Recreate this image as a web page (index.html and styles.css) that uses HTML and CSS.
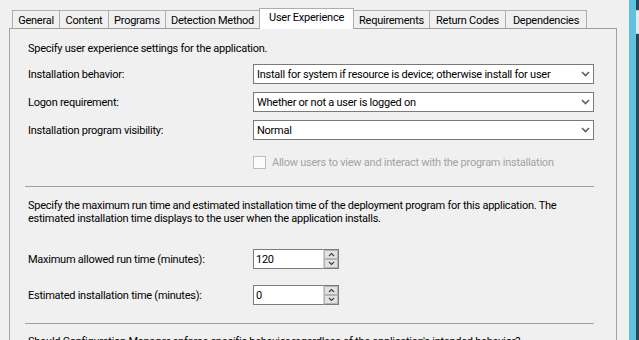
FILE: index.html
```html
<!DOCTYPE html>
<html>
<head>
<meta charset="utf-8">
<link rel="stylesheet" href="styles.css">
</head>
<body>
<div class="screen">
  <div class="main">
    <div class="tabs">
      <div class="tab w-general">General</div>
      <div class="tab w-content">Content</div>
      <div class="tab w-programs">Programs</div>
      <div class="tab w-detection">Detection Method</div>
      <div class="tab active w-ux">User Experience</div>
      <div class="tab w-req">Requirements</div>
      <div class="tab w-ret">Return Codes</div>
      <div class="tab w-dep">Dependencies</div>
    </div>
    <div class="panel">
      <p class="intro">Specify user experience settings for the application.</p>
      <div class="rows">
        <div class="row">
          <span class="label">Installation behavior:</span>
          <div class="select"><span class="value">Install for system if resource is device; otherwise install for user</span><svg class="chev" width="9" height="6" viewBox="0 0 9 6"><path d="M1 1 L4.5 4.5 L8 1" fill="none" stroke="#606060" stroke-width="1.6"/></svg></div>
        </div>
        <div class="row">
          <span class="label">Logon requirement:</span>
          <div class="select"><span class="value">Whether or not a user is logged on</span><svg class="chev" width="9" height="6" viewBox="0 0 9 6"><path d="M1 1 L4.5 4.5 L8 1" fill="none" stroke="#606060" stroke-width="1.6"/></svg></div>
        </div>
        <div class="row">
          <span class="label">Installation program visibility:</span>
          <div class="select"><span class="value">Normal</span><svg class="chev" width="9" height="6" viewBox="0 0 9 6"><path d="M1 1 L4.5 4.5 L8 1" fill="none" stroke="#606060" stroke-width="1.6"/></svg></div>
        </div>
      </div>
      <div class="check-row">
        <span class="checkbox"></span>
        <span class="check-label">Allow users to view and interact with the program installation</span>
      </div>
      <div class="sep"></div>
      <p class="para">Specify the maximum run time and estimated installation time of the deployment program for this application. The<br>estimated installation time displays to the user when the application installs.</p>
      <div class="row num-row first">
        <span class="label">Maximum allowed run time (minutes):</span>
        <div class="spin-field">
          <div class="num-input">120</div>
          <div class="spin">
            <div class="spin-btn up"><svg width="7" height="5" viewBox="0 0 7 5"><path d="M1 4 L3.5 1.5 L6 4" fill="none" stroke="#404040" stroke-width="1.2"/></svg></div>
            <div class="spin-btn down"><svg width="7" height="5" viewBox="0 0 7 5"><path d="M1 1 L3.5 3.5 L6 1" fill="none" stroke="#404040" stroke-width="1.2"/></svg></div>
          </div>
        </div>
      </div>
      <div class="row num-row second">
        <span class="label">Estimated installation time (minutes):</span>
        <div class="spin-field">
          <div class="num-input">0</div>
          <div class="spin">
            <div class="spin-btn up"><svg width="7" height="5" viewBox="0 0 7 5"><path d="M1 4 L3.5 1.5 L6 4" fill="none" stroke="#404040" stroke-width="1.2"/></svg></div>
            <div class="spin-btn down"><svg width="7" height="5" viewBox="0 0 7 5"><path d="M1 1 L3.5 3.5 L6 1" fill="none" stroke="#404040" stroke-width="1.2"/></svg></div>
          </div>
        </div>
      </div>
      <div class="sep sep2"></div>
      <p class="last">Should Configuration Manager enforce specific behavior regardless of the application's intended behavior?</p>
    </div>
  </div>
  <div class="gap"></div>
  <div class="blue"></div>
  <div class="edge"><div class="edge-box"></div></div>
</div>
</body>
</html>
```
FILE: styles.css
```css
html, body {
  margin: 0;
  padding: 0;
}
.screen {
  width: 639px;
  height: 340px;
  overflow: hidden;
  display: flex;
  background: #f0f0f0;
  font-family: Roboto, "Liberation Sans", sans-serif;
  font-size: 11px;
  letter-spacing: -0.25px;
  color: #000;
}
.main {
  width: 617px;
  flex: none;
  padding: 8px 0 0 9px;
  box-sizing: border-box;
}
.gap {
  width: 12px;
  flex: none;
  background: #f0f0f0;
}
.blue {
  width: 7px;
  flex: none;
  background: #5fc3e0;
}
.edge {
  width: 3px;
  flex: none;
  background: #2f4450;
  padding-top: 10px;
  box-sizing: border-box;
}
.edge-box {
  height: 22px;
  border-top: 1px solid #c8c8c8;
  border-bottom: 1px solid #c8c8c8;
  background: #e8e8e8;
}
.tabs {
  display: flex;
  align-items: flex-end;
  height: 20px;
  margin-left: 3px;
}
.tab {
  height: 18px;
  box-sizing: border-box;
  border: 1px solid #adadad;
  border-bottom: none;
  margin-left: -1px;
  display: flex;
  align-items: center;
  justify-content: center;
  background: #f0f0f0;
  white-space: nowrap;
  line-height: 14px;
  padding-top: 2px;
}
.tab:first-child {
  margin-left: 0;
}
.tab.active {
  height: 21px;
  margin-bottom: -1px;
  background: #fff;
  position: relative;
  z-index: 1;
  padding-top: 0;
  padding-bottom: 2px;
}
.w-general { width: 48px; }
.w-content { width: 50px; }
.w-programs { width: 58px; }
.w-detection { width: 95px; }
.w-ux { width: 95px; }
.w-req { width: 77px; }
.w-ret { width: 77px; }
.w-dep { width: 82px; }
.panel {
  width: 608px;
  height: 400px;
  box-sizing: border-box;
  border: 1px solid #a0a0a0;
  padding: 0 0 0 18px;
}
p {
  margin: 0;
}
.intro {
  margin-top: 12px;
  line-height: 16px;
}
.rows {
  margin-top: 7px;
  display: flex;
  flex-direction: column;
  gap: 8px;
}
.row {
  display: flex;
  align-items: center;
  height: 20px;
}
.label {
  width: 225px;
  flex: none;
  white-space: nowrap;
  padding-top: 1px;
}
.select {
  width: 341px;
  height: 20px;
  box-sizing: border-box;
  border: 1px solid #7a7a7a;
  background: #fff;
  display: flex;
  align-items: center;
  justify-content: space-between;
  padding: 1px 3px 0 3px;
}
.select .value {
  white-space: nowrap;
}
.chev {
  display: block;
  margin-top: -1px;
}
.check-row {
  margin-top: 15px;
  height: 14px;
  display: flex;
  align-items: center;
  padding-left: 225px;
}
.checkbox {
  width: 13px;
  height: 13px;
  box-sizing: border-box;
  border: 1px solid #bcbcbc;
  background: #fbfbfb;
  flex: none;
}
.check-label {
  margin-left: 6px;
  color: #a3a3a3;
  white-space: nowrap;
}
.sep {
  margin: 17px 0 0 -3px;
  width: 569px;
  height: 1px;
  background: #a0a0a0;
}
.para {
  margin-top: 12px;
  line-height: 13px;
  white-space: nowrap;
}
.num-row.first {
  margin-top: 24px;
}
.num-row.second {
  margin-top: 16px;
}
.spin-field {
  display: flex;
  height: 20px;
}
.num-input {
  width: 70px;
  height: 20px;
  box-sizing: border-box;
  border: 1px solid #7a7a7a;
  border-right: none;
  background: #fff;
  padding-left: 2px;
  line-height: 19px;
}
.spin {
  width: 16px;
  height: 20px;
  box-sizing: border-box;
  border: 1px solid #7a7a7a;
  border-left: 1px solid #d0d0d0;
  background: #fff;
  display: flex;
  flex-direction: column;
}
.spin-btn {
  flex: 1;
  background: #e1e1e1;
  border: 1px solid #b4b4b4;
  display: flex;
  align-items: center;
  justify-content: center;
}
.spin-btn svg {
  display: block;
}
.sep2 {
  margin-top: 18px;
}
.last {
  margin-top: 10px;
  line-height: 16px;
  white-space: nowrap;
}
```
